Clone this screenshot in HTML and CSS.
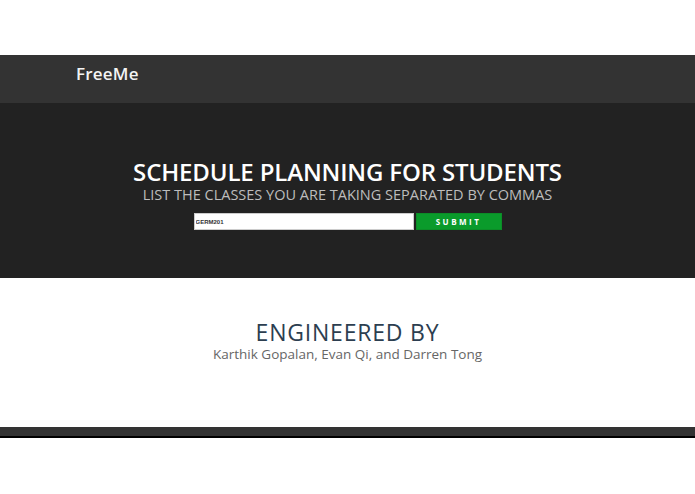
FILE: index.html
```html
<!DOCTYPE html>
<html>
<head>
<meta charset="utf-8">
<link rel="stylesheet" href="styles.css">
</head>
<body>
<div class="top-space"></div>
<nav class="navbar"><div class="brand">FreeMe</div></nav>
<section class="hero">
  <h1 class="hero-title">SCHEDULE PLANNING FOR STUDENTS</h1>
  <p class="hero-sub">LIST THE CLASSES YOU ARE TAKING SEPARATED BY COMMAS</p>
  <form class="class-form">
    <input class="class-input" type="text" value="GERM201">
    <button class="submit-btn" type="button">SUBMIT</button>
  </form>
</section>
<section class="about">
  <h2 class="about-title">ENGINEERED BY</h2>
  <p class="about-names">Karthik Gopalan, Evan Qi, and Darren Tong</p>
</section>
<footer class="footer"></footer>
</body>
</html>
```
FILE: styles.css
```css
* { box-sizing: border-box; }
html, body { margin: 0; padding: 0; background: #fff; }
body { font-family: "Open Sans", "DejaVu Sans", sans-serif; }
.top-space { height: 55px; background: #fff; }
.navbar {
  height: 48px;
  background: #333333;
  display: flex;
  align-items: flex-start;
  padding-left: 76px;
  padding-top: 9px;
}
.brand { color: #f4f4f4; font-size: 17px; font-weight: 600; line-height: 20px; letter-spacing: 0.2px; }
.hero {
  height: 175px;
  background: #222222;
  display: flex;
  flex-direction: column;
  align-items: center;
  padding-top: 54px;
}
.hero-title { margin: 0; color: #fff; font-size: 24px; font-weight: 600; line-height: 29px; letter-spacing: -0.15px; }
.hero-sub { margin: 0; color: #bdbdbd; font-size: 14.5px; font-weight: 400; line-height: 18px; }
.class-form { display: flex; margin-top: 9px; gap: 2px; }
.class-input {
  width: 220px; height: 17px; border: 1px solid #ccc; padding: 0 0 0 1px; margin: 0;
  font-family: "Liberation Sans", sans-serif; font-size: 6px; font-weight: 700; color: #333; background: #fff;
}
.submit-btn {
  width: 86px; height: 17px; margin: 0; border: 1px solid #0b8d27; background: #0a9b2b;
  color: #fff; font-family: "Open Sans", sans-serif; font-size: 8px; font-weight: 700;
  letter-spacing: 2.5px; padding: 0;
}
.about {
  height: 149px;
  display: flex;
  flex-direction: column;
  align-items: center;
  padding-top: 40px;
}
.about-title { margin: 0; color: #2c3e50; font-size: 23px; font-weight: 500; line-height: 28px; letter-spacing: 0.8px; }
.about-names { margin: 0; color: #666; font-size: 13.5px; line-height: 17px; }
.footer { height: 11px; background: #333; border-bottom: 2px solid #000; }
```
